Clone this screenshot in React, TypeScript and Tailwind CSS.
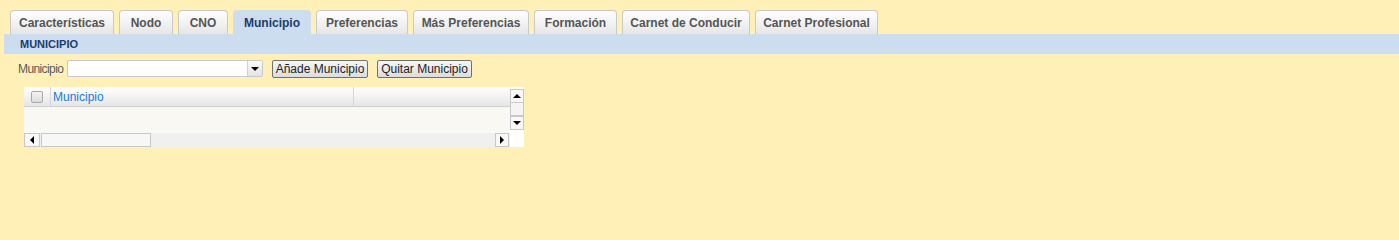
import React from "react";

const tabs = [
  { label: "Características", w: "w-[104px]" },
  { label: "Nodo", w: "w-[54px]" },
  { label: "CNO", w: "w-[50px]" },
  { label: "Municipio", w: "w-[78px]", active: true },
  { label: "Preferencias", w: "w-[92px]" },
  { label: "Más Preferencias", w: "w-[116px]" },
  { label: "Formación", w: "w-[83px]" },
  { label: "Carnet de Conducir", w: "w-[128px]" },
  { label: "Carnet Profesional", w: "w-[123px]" },
];

const Tri = ({ dir }: { dir: "up" | "down" | "left" | "right" }) => {
  const pts =
    dir === "up"
      ? "0,5 4,1 8,5"
      : dir === "down"
      ? "0,1 8,1 4,5"
      : dir === "left"
      ? "5,0 5,8 1,4"
      : "1,0 1,8 5,4";
  const w = dir === "up" || dir === "down" ? 8 : 6;
  const h = dir === "up" || dir === "down" ? 6 : 8;
  return (
    <svg width={w} height={h} viewBox={`0 0 ${w} ${h}`}>
      <polygon points={pts} fill="#000" />
    </svg>
  );
};

export default function App() {
  return (
    <div
      className="w-full h-screen min-h-[220px] bg-[#fff0b7] overflow-hidden"
      style={{ fontFamily: '"Liberation Sans", Arial, sans-serif' }}
    >
      {/* Tabs */}
      <div className="flex gap-[5px] pl-[10px] pt-[10px]">
        {tabs.map((t) => (
          <div
            key={t.label}
            className={`${t.w} shrink-0 h-[24px] flex items-center justify-center rounded-t-[4px] border border-b-0 text-[12px] font-bold ${
              t.active
                ? "bg-[#cbddee] border-[#cbddee] text-[#1d3c6c]"
                : "bg-gradient-to-b from-[#ffffff] to-[#e6e6e6] border-[#c9c9c9] text-[#555555]"
            }`}
          >
            {t.label}
          </div>
        ))}
      </div>
      {/* Section bar */}
      <div className="ml-[4px] h-[20px] bg-[#cbddee] flex items-center pl-[16px] text-[11px] font-bold text-[#1d3c6c]">
        MUNICIPIO
      </div>
      {/* Form row */}
      <div className="flex items-center mt-[6px] pl-[18px] h-[17px]">
        <span className="w-[49px] text-[12px] tracking-[-0.6px] text-[#5a5a5a] whitespace-nowrap">Municipio</span>
        <div className="flex h-[17px] w-[196px] border border-[#c8c8c8] rounded-[2px] bg-white">
          <div className="flex-1" />
          <div className="w-[15px] border-l border-[#d0d0d0] bg-gradient-to-b from-[#fafafa] to-[#e4e4e4] flex items-center justify-center">
            <Tri dir="down" />
          </div>
        </div>
        <button className="ml-[9px] w-[96px] h-[18px] border border-[#707070] rounded-[2px] bg-gradient-to-b from-[#f6f6f6] to-[#dddddd] text-[12px] text-[#222] leading-none flex items-center justify-center">
          Añade Municipio
        </button>
        <button className="ml-[9px] w-[95px] h-[18px] border border-[#707070] rounded-[2px] bg-gradient-to-b from-[#f6f6f6] to-[#dddddd] text-[12px] text-[#222] leading-none flex items-center justify-center">
          Quitar Municipio
        </button>
      </div>
      {/* Grid */}
      <div className="ml-[24px] mt-[10px] w-[500px] flex">
        <div className="w-[486px]">
          <div className="h-[20px] flex bg-gradient-to-b from-[#ffffff] to-[#e6e6e6] border-b border-[#cfcfcf]">
            <div className="w-[27px] flex items-center justify-center border-r border-[#d6d6d6]">
              <div className="w-[12px] h-[12px] rounded-[2px] border border-[#a8a8a8] bg-gradient-to-b from-[#f4f4f4] to-[#dcdcdc]" />
            </div>
            <div className="w-[303px] flex items-center pl-[2px] border-r border-[#d6d6d6] text-[12px] text-[#1a7ad4]">
              Municipio
            </div>
            <div className="flex-1" />
          </div>
          <div className="h-[26px] bg-[#f9f8f3]" />
          <div className="h-[14px] bg-[#f0f0f0] flex">
            <div className="w-[16px] h-[14px] border border-[#c8c8c8] bg-[#f8f8f8] flex items-center justify-center">
              <Tri dir="left" />
            </div>
            <div className="ml-[1px] w-[110px] h-[14px] border border-[#c8c8c8] bg-[#f7f7f7]" />
            <div className="flex-1" />
            <div className="mr-[1px] w-[14px] h-[14px] border border-[#c8c8c8] bg-[#f8f8f8] flex items-center justify-center">
              <Tri dir="right" />
            </div>
          </div>
        </div>
        <div className="w-[14px] bg-white pt-[2px] flex flex-col">
          <div className="w-[14px] h-[14px] border border-[#c8c8c8] bg-[#f8f8f8] flex items-center justify-center">
            <Tri dir="up" />
          </div>
          <div className="w-[14px] h-[13px] border border-t-0 border-[#c8c8c8] bg-[#f4f4f4]" />
          <div className="w-[14px] h-[14px] border border-[#c8c8c8] bg-[#f8f8f8] flex items-center justify-center">
            <Tri dir="down" />
          </div>
        </div>
      </div>
    </div>
  );
}
